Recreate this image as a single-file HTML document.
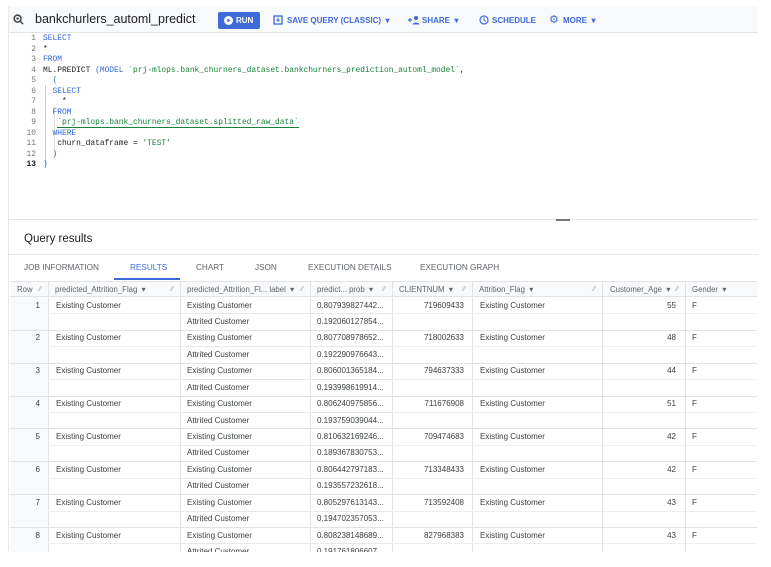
<!DOCTYPE html>
<html><head><meta charset="utf-8"><style>
*{margin:0;padding:0;box-sizing:border-box}
body{width:771px;height:567px;background:#fff;position:relative;overflow:hidden;font-family:"Liberation Sans",sans-serif;color:#202124}
.a{position:absolute;white-space:nowrap}
.code{font-family:"Liberation Mono",monospace;font-size:7.9px;line-height:10.5px}
.ln{color:#777;text-align:right;width:24px}
.kw{color:#3367d6}
.str{color:#188038}
.tb{font-size:8px;color:#3c6ad8;font-weight:bold;top:16px}
.tab{font-size:8.2px;color:#5f6368;top:263px}
.cell{font-size:8px;color:#3c4043}
.hd{font-size:7.8px;color:#5f6368}
</style></head><body>
<div class="a" style="left:8px;top:6px;width:750px;height:27px;background:#f8f9fa;border-bottom:1px solid #e3e3e3"></div>
<div class="a" style="left:8px;top:6px;width:1px;height:545px;background:#e8e8e8"></div>
<svg class="a" style="left:13px;top:14px" width="11" height="11" viewBox="0 0 12 12"><circle cx="5" cy="5" r="3.8" fill="none" stroke="#3c4043" stroke-width="1.6"/><circle cx="5" cy="5" r="1.3" fill="#3c4043"/><path d="M8 8l3 3" stroke="#3c4043" stroke-width="1.6"/></svg>
<div class="a" style="left:35px;top:12px;font-size:12.5px;color:#202124">bankchurlers_automl_predict</div>
<div class="a" style="left:218px;top:12px;width:42px;height:17px;background:#3c6ad8;border-radius:2px"></div>
<svg class="a" style="left:224px;top:16px" width="9" height="9"><circle cx="4.5" cy="4.5" r="4.5" fill="#fff"/><path d="M3.3 2.5L6.5 4.5L3.3 6.5Z" fill="#3c6ad8"/></svg>
<div class="a" style="left:236px;top:16px;font-size:8px;color:#fff;font-weight:bold">RUN</div>
<svg class="a" style="left:273px;top:15px" width="10" height="10"><rect x="1" y="1" width="8" height="8" fill="none" stroke="#3c6ad8" stroke-width="1.3"/><path d="M5 2.5v3.5M3.5 4.8L5 6.2L6.5 4.8" stroke="#3c6ad8" fill="none"/></svg>
<div class="a tb" style="left:287px">SAVE QUERY (CLASSIC) &nbsp;▾</div>
<svg class="a" style="left:408px;top:15px" width="12" height="10"><path d="M0 5h4M2 3v4" stroke="#3c6ad8" stroke-width="1.2"/><circle cx="8" cy="3" r="2" fill="#3c6ad8"/><path d="M4.5 9.5c0-2.5 7-2.5 7 0z" fill="#3c6ad8"/></svg>
<div class="a tb" style="left:422px">SHARE &nbsp;▾</div>
<svg class="a" style="left:479px;top:15px" width="10" height="10"><circle cx="5" cy="5" r="4" fill="none" stroke="#3c6ad8" stroke-width="1.2"/><path d="M5 2.5V5L6.8 6.3" stroke="#3c6ad8" fill="none"/></svg>
<div class="a tb" style="left:492px">SCHEDULE</div>
<div class="a" style="left:549px;top:13px;font-size:11px;color:#3c6ad8">⚙</div>
<div class="a tb" style="left:563px">MORE &nbsp;▾</div>

<div class="a code ln" style="left:12px;top:34px">1<br>2<br>3<br>4<br>5<br>6<br>7<br>8<br>9<br>10<br>11<br>12<br><b style="color:#202124">13</b></div>
<div class="a" style="left:45px;top:85px;width:1px;height:83px;background:#ccc"></div>
<div class="a" style="left:54px;top:106px;width:1px;height:52px;background:#ddd"></div>
<div class="a code" style="left:43px;top:34px;color:#202124"><span class="kw">SELECT</span><br>*<br><span class="kw">FROM</span><br>ML.PREDICT <span class="kw">(MODEL</span> <span class="str">`prj-mlops.bank_churners_dataset.bankchurners_prediction_automl_model`</span>,<br>&nbsp;&nbsp;<span class="kw">(</span><br>&nbsp;&nbsp;<span class="kw">SELECT</span><br>&nbsp;&nbsp;&nbsp;&nbsp;*<br>&nbsp;&nbsp;<span class="kw">FROM</span><br>&nbsp;&nbsp;&nbsp;<span class="str" style="border-bottom:1px solid #188038">`prj-mlops.bank_churners_dataset.splitted_raw_data`</span><br>&nbsp;&nbsp;<span class="kw">WHERE</span><br>&nbsp;&nbsp;&nbsp;churn_dataframe = <span class="str">'TEST'</span><br>&nbsp;&nbsp;<span class="kw">)</span><br><span class="kw">)</span></div>

<div class="a" style="left:8px;top:219px;width:750px;height:1px;background:#e6e6e6"></div>
<div class="a" style="left:556px;top:219px;width:14px;height:2px;background:#777"></div>
<div class="a" style="left:24px;top:233px;font-size:11.5px;color:#202124">Query results</div>
<div class="a" style="left:8px;top:254px;width:750px;height:1px;background:#e6e6e6"></div>
<div class="a tab" style="left:24px">JOB INFORMATION</div>
<div class="a tab" style="left:130px;color:#3c6ad8">RESULTS</div>
<div class="a" style="left:114px;top:278px;width:66px;height:2px;background:#3c6ad8"></div>
<div class="a tab" style="left:196px">CHART</div>
<div class="a tab" style="left:255px">JSON</div>
<div class="a tab" style="left:308px">EXECUTION DETAILS</div>
<div class="a tab" style="left:420px">EXECUTION GRAPH</div>

<div id="t"></div>
<script>
var cols=[10,48,180,310,392,472,602,685,757];
var h='';
h+='<div class="a" style="left:10px;top:281px;width:747px;height:16px;background:#f8f9fa;border-top:1px solid #e3e3e3;border-bottom:1px solid #e3e3e3"></div>';
h+='<div class="a" style="left:10px;top:297px;width:38px;height:255px;background:#f8f9fa"></div>';
for(var i=1;i<cols.length-1;i++)h+='<div class="a" style="left:'+cols[i]+'px;top:281px;width:1px;height:271px;background:#e3e3e3"></div>';
var hd=['Row','predicted_Attrition_Flag &nbsp;▾','predicted_Attrition_Fl... label &nbsp;▾','predict... prob &nbsp;▾','CLIENTNUM &nbsp;▾','Attrition_Flag &nbsp;▾','Customer_Age &nbsp;▾','Gender &nbsp;▾'];
for(i=0;i<hd.length;i++){var x=cols[i]+(i==6?8:7);h+='<div class="a hd" style="left:'+x+'px;top:285px">'+hd[i]+'</div>';if(i<7)h+='<div class="a" style="left:'+(cols[i+1]-9)+'px;top:286px;font-size:7px;color:#aaa">⁄⁄</div>';}
var d=[['0.807939827442...','0.192060127854...','719609433',55],['0.807708978652...','0.192290976643...','718002633',48],['0.806001365184...','0.193998619914...','794637333',44],['0.806240975856...','0.193759039044...','711676908',51],['0.810632169246...','0.189367830753...','709474683',42],['0.806442797183...','0.193557232618...','713348433',42],['0.805297613143...','0.194702357053...','713592408',43],['0.808238148689...','0.191761806607...','827968383',43]];
for(var r=0;r<8;r++){var y=297+r*32.86;
h+='<div class="a" style="left:10px;top:'+(y+32.86)+'px;width:747px;height:1px;background:#e3e3e3"></div>';
h+='<div class="a" style="left:180px;top:'+(y+16.4)+'px;width:212px;height:1px;background:#e8e8e8"></div>';
h+='<div class="a" style="left:48px;top:'+(y+16.4)+'px;width:132px;height:1px;background:#eee"></div>';
h+='<div class="a" style="left:392px;top:'+(y+16.4)+'px;width:365px;height:1px;background:#eee"></div>';
var t=y+3.5,t2=y+20;
h+='<div class="a cell" style="left:10px;width:30px;text-align:right;top:'+t+'px">'+(r+1)+'</div>';
h+='<div class="a cell" style="left:56px;top:'+t+'px">Existing Customer</div>';
h+='<div class="a cell" style="left:187px;top:'+t+'px">Existing Customer</div>';
h+='<div class="a cell" style="left:187px;top:'+t2+'px">Attrited Customer</div>';
h+='<div class="a cell" style="left:317px;top:'+t+'px">'+d[r][0]+'</div>';
h+='<div class="a cell" style="left:317px;top:'+t2+'px">'+d[r][1]+'</div>';
h+='<div class="a cell" style="left:392px;width:72px;text-align:right;top:'+t+'px">'+d[r][2]+'</div>';
h+='<div class="a cell" style="left:480px;top:'+t+'px">Existing Customer</div>';
h+='<div class="a cell" style="left:602px;width:74px;text-align:right;top:'+t+'px">'+d[r][3]+'</div>';
h+='<div class="a cell" style="left:692px;top:'+t+'px">F</div>';}
h+='<div class="a" style="left:0;top:552px;width:771px;height:15px;background:#fff"></div>';
document.getElementById('t').innerHTML=h;
</script>
</body></html>
